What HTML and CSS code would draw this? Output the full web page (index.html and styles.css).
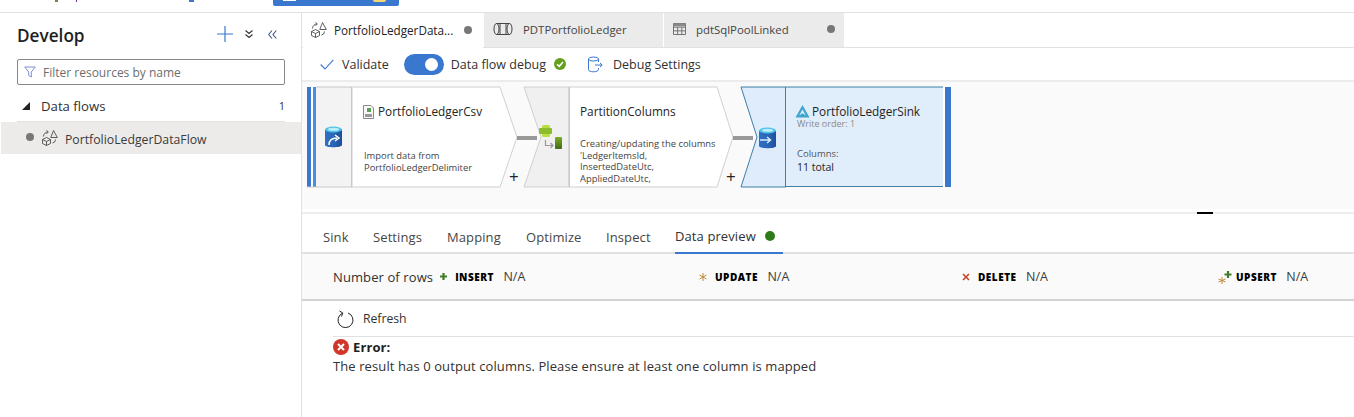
FILE: index.html
```html
<!DOCTYPE html>
<html lang="en">
<head>
<meta charset="utf-8">
<title>Develop - PortfolioLedgerDataFlow</title>
<link rel="stylesheet" href="styles.css">
</head>
<body>
<svg class="defs" width="0" height="0" aria-hidden="true">
  <defs>
    <linearGradient id="dbBody" x1="0" y1="0" x2="1" y2="0"><stop offset="0" stop-color="#2f6fc4"/><stop offset="0.5" stop-color="#2a66b8"/><stop offset="1" stop-color="#1d4f9a"/></linearGradient>
    <linearGradient id="greenBar" x1="0" y1="0" x2="0" y2="1"><stop offset="0" stop-color="#7cab2a"/><stop offset="1" stop-color="#3f6d12"/></linearGradient>
    <symbol id="flowIcon" viewBox="0 0 17 17">
      <g fill="none" stroke="#444" stroke-width=".85">
        <path d="M5.500 8.500 9.500 10.500V14.500L5.500 16.500 1.500 14.500V10.500ZM1.500 10.500 5.500 12.500 9.500 10.500M5.500 12.500V16.500"/>
        <path d="M12.500 1.500 16.300 8.500H9.800Z"/>
        <path d="M2.500 7.500A4.500 4.500 0 0 1 7 3M5.500 1.200 7.300 3 5.500 4.800"/>
        <path d="M14.500 10.500A3.500 3.500 0 0 1 11.500 14"/>
      </g>
    </symbol>
  </defs>
</svg>

<header class="topbar">
  <span class="crumb crumb-a"></span>
  <span class="crumb crumb-b"></span>
  <span class="crumb crumb-c"></span>
  <div class="top-button"><span class="top-white"></span><span class="top-yellow"></span></div>
</header>

<div class="main">
  <aside class="sidebar">
    <div class="side-head">
      <h1 class="side-title">Develop</h1>
      <svg class="ic-plus" width="16" height="16" viewBox="0 0 16 16"><path d="M8 0V16M0 8H16" stroke="#3a78d0" stroke-width="1.200" fill="none"/></svg>
      <svg class="ic-down" width="8" height="8" viewBox="0 0 8 8"><path d="M.5 .5 4 3.500 7.500 .5M.5 4.500 4 7.500 7.500 4.500" stroke="#333" stroke-width="1.100" fill="none"/></svg>
      <svg class="ic-left" width="9" height="9" viewBox="0 0 9 9"><path d="M4 .5 .7 4.500 4 8.500M8.300 .5 5 4.500 8.300 8.500" stroke="#3a5a8a" stroke-width="1.100" fill="none"/></svg>
    </div>
    <div class="filter">
      <svg width="12" height="12" viewBox="0 0 12 12"><path d="M.7 1H11.300L7.300 6V11L4.700 9.500V6Z" fill="none" stroke="#7a8fd0" stroke-width="1"/></svg>
      <span class="filter-text">Filter resources by name</span>
    </div>
    <div class="group-row">
      <svg width="8" height="8" viewBox="0 0 8 8"><path d="M8 0V8H0Z" fill="#222"/></svg>
      <span class="group-name">Data flows</span>
      <span class="group-count">1</span>
    </div>
    <div class="flow-row">
      <span class="dot"></span>
      <svg class="flow-ic" width="17" height="17"><use href="#flowIcon"/></svg>
      <span class="flow-name">PortfolioLedgerDataFlow</span>
    </div>
  </aside>

  <section class="content">
    <nav class="doc-tabs">
      <div class="doc-tab doc-tab-active">
        <svg width="17" height="17"><use href="#flowIcon"/></svg>
        <span class="doc-name doc-name-active">PortfolioLedgerData...</span>
        <span class="dot dot-end"></span>
      </div>
      <div class="doc-tab">
        <svg width="20" height="14" viewBox="0 0 20 14"><g fill="none" stroke="#444" stroke-width="1"><ellipse cx="3.500" cy="7" rx="2.500" ry="5.500"/><ellipse cx="16.500" cy="7" rx="2.500" ry="5.500"/><path d="M3.500 1.500H16.500M3.500 12.500H16.500"/><path d="M7 2V12M13 2V12"/></g></svg>
        <span class="doc-name">PDTPortfolioLedger</span>
      </div>
      <div class="doc-tab doc-tab-last">
        <svg width="13" height="12" viewBox="0 0 14 13"><g fill="none" stroke="#6a6a6a" stroke-width="1"><path d="M.5 .5H13.500V12.500H.5ZM.5 4.500H13.500M.5 8.500H13.500M5 4.500V12.500M9.500 4.500V12.500"/></g><path d="M.5 .5H13.500V3.500H.5Z" fill="#8a8a8a"/></svg>
        <span class="doc-name">pdtSqlPoolLinked</span>
        <span class="dot dot-end"></span>
      </div>
    </nav>

    <div class="toolbar">
      <svg class="tb-check" width="14" height="11" viewBox="0 0 14 11"><path d="M.7 5.500 5 10 13.300 .8" fill="none" stroke="#3a78d0" stroke-width="1.100"/></svg>
      <span class="tb-validate">Validate</span>
      <span class="toggle"><span class="knob"></span></span>
      <span class="tb-debug">Data flow debug</span>
      <svg class="tb-ok" width="12" height="12" viewBox="0 0 12 12"><circle cx="6" cy="6" r="6" fill="#63a01f"/><path d="M3 6.200 5.200 8.300 9 4" fill="none" stroke="#fff" stroke-width="1.500"/></svg>
      <svg class="tb-db" width="17" height="17" viewBox="0 0 17 17"><g fill="none" stroke="#3a78d0" stroke-width="1"><ellipse cx="6.500" cy="3" rx="5" ry="2"/><path d="M1.500 3V13.500C1.500 15 4 15.800 6.500 15.800S11.500 15 11.500 13.500V12M11.500 3V6"/><path d="M8 9H15M13 7 15.200 9 13 11"/></g></svg>
      <span class="tb-settings">Debug Settings</span>
    </div>

    <div class="canvas">
      <svg class="canvas-art" width="660" height="127" viewBox="302 82 660 127">
        <!-- source node -->
        <path d="M316 87H352V187H316Z" fill="#f3f3f3"/>
        <rect x="307" y="87" width="4" height="100" fill="#3a78d0"/>
        <rect x="311" y="87" width="2" height="100" fill="#fff"/>
        <rect x="313" y="87" width="3" height="100" fill="#4e8be0"/>
        <path d="M352 87H500L517 137 500 187H352Z" fill="#fff" stroke="#d0d0d0"/>
        <path d="M351.500 87V187" stroke="#c8c8c8"/>
        <path d="M307 187H352M316 87H352" stroke="#c8c8c8"/>
        <path d="M325 129V145C325 148 342 148 342 145V129Z" fill="url(#dbBody)"/>
        <ellipse cx="333.500" cy="129.500" rx="8.500" ry="3" fill="#4fc3e8"/>
        <ellipse cx="333.500" cy="129.300" rx="5.500" ry="1.500" fill="#bdeefa"/>
        <path d="M329 145C329 140 332 138 337 138M335 135 339 138 335 141" fill="none" stroke="#fff" stroke-width="1.500"/>
        <!-- transform node -->
        <path d="M524 87H569V187H524L541 137Z" fill="#f0f0f0" stroke="#d0d0d0"/>
        <path d="M569 87H717L733 137 717 187H569Z" fill="#fff" stroke="#d0d0d0"/>
        <path d="M569.500 87V187" stroke="#c8c8c8"/>
        <rect x="517" y="136" width="20" height="4" fill="#999"/>
        <rect x="542" y="125" width="8" height="12" rx="1.500" fill="#b8de40"/>
        <rect x="539" y="128" width="13" height="6" rx="1" fill="#8cbc2c"/>
        <path d="M545.500 140V145.500H553M550.500 143 553 145.500 550.500 148" fill="none" stroke="#999" stroke-width="1.200"/>
        <rect x="555" y="137" width="7" height="12" rx="1" fill="url(#greenBar)"/>
        <!-- sink node -->
        <path d="M741 87H786V187H741L757 137Z" fill="#deecfb" stroke="#3f7fa6"/>
        <rect x="786" y="87" width="165" height="100" fill="#e0edfb"/>
        <path d="M785.500 87V187M786 87H943M786 186.500H943" stroke="#3f7fa6"/>
        <rect x="943" y="87" width="2" height="100" fill="#fff"/>
        <rect x="945" y="87" width="6" height="100" fill="#3a78d0"/>
        <rect x="733" y="136" width="20" height="4" fill="#999"/>
        <path d="M759 131V146C759 149 776 149 776 146V131Z" fill="url(#dbBody)"/>
        <ellipse cx="767.500" cy="130.500" rx="8.500" ry="3" fill="#4fc3e8"/>
        <ellipse cx="767.500" cy="130.300" rx="5.500" ry="1.500" fill="#bdeefa"/>
        <path d="M760 140H770M767 137 770.500 140 767 143" fill="none" stroke="#d7ecfa" stroke-width="1.500"/>
        <!-- sink logo -->
        <path d="M802.500 105 809.500 117.500H795.500Z" fill="#41a5cf"/>
        <path d="M802.500 109.500 805.800 115.500 802.500 113.300 799.200 115.500Z" fill="#e0edfb"/>
        <!-- csv file icon -->
        <path d="M363.500 105.500H371L373.500 108V118.500H363.500Z" fill="#f8f8f8" stroke="#888"/>
        <rect x="367" y="108" width="4" height="4" fill="#5c9e58"/>
        <rect x="365" y="114" width="7" height="3" fill="#999"/>
      </svg>

      <div class="node-text src-title"><span class="node-title">PortfolioLedgerCsv</span></div>
      <p class="node-text node-desc src-desc">Import data from<br>PortfolioLedgerDelimiter</p>
      <span class="node-text plus plus-a">+</span>

      <div class="node-text pc-title"><span class="node-title">PartitionColumns</span></div>
      <div class="node-text node-desc pc-desc">Creating/updating the columns<br>'LedgerItemsId,<br>InsertedDateUtc,<br>AppliedDateUtc,<br>LedgerItemType</div>
      <span class="node-text plus plus-b">+</span>

      <div class="node-text sink-title"><span class="node-title">PortfolioLedgerSink</span></div>
      <span class="node-text sink-order">Write order: 1</span>
      <span class="node-text sink-cols">Columns:</span>
      <span class="node-text sink-total">11 total</span>
    </div>

    <div class="splitter"><span class="grip"></span></div>

    <nav class="panel-tabs">
      <span class="panel-tab tab-sink">Sink</span>
      <span class="panel-tab tab-settings">Settings</span>
      <span class="panel-tab tab-mapping">Mapping</span>
      <span class="panel-tab tab-optimize">Optimize</span>
      <span class="panel-tab tab-inspect">Inspect</span>
      <span class="panel-tab tab-preview">Data preview<span class="green-dot"></span></span>
    </nav>

    <div class="stats">
      <div class="stat">
        <span class="stat-lead">Number of rows</span>
        <svg class="s-insert" width="7" height="7" viewBox="0 0 7 7"><path d="M3.500 0V7M0 3.500H7" stroke="#3f7d2a" stroke-width="2.200"/></svg>
        <b class="stat-key">INSERT</b><span class="stat-val">N/A</span>
      </div>
      <div class="stat">
        <svg class="s-update" width="8" height="8" viewBox="0 0 8 8"><path d="M4 0V8M.5 2 7.500 6M.5 6 7.500 2" stroke="#c08a3a" stroke-width="1"/></svg>
        <b class="stat-key">UPDATE</b><span class="stat-val">N/A</span>
      </div>
      <div class="stat">
        <svg class="s-delete" width="8" height="8" viewBox="0 0 8 8"><path d="M1 1 7 7M7 1 1 7" stroke="#c8401e" stroke-width="1.500"/></svg>
        <b class="stat-key">DELETE</b><span class="stat-val">N/A</span>
      </div>
      <div class="stat">
        <svg class="s-upsert" width="14" height="14" viewBox="0 0 14 14"><path d="M10 1V8M6.500 4.500H13.500" stroke="#3f7d2a" stroke-width="2.200"/><path d="M4 7V14M.5 9 7.500 12M.5 12 7.500 9" stroke="#c08a3a" stroke-width="1"/></svg>
        <b class="stat-key">UPSERT</b><span class="stat-val">N/A</span>
      </div>
    </div>

    <div class="refresh-row">
      <svg width="17" height="18" viewBox="0 0 17 18"><path d="M5.500 3.200A7.500 7.500 0 1 0 11 3" fill="none" stroke="#222" stroke-width="1"/><path d="M2.500 1 5.800 3 4.500 6.500" fill="none" stroke="#222" stroke-width="1"/></svg>
      <span>Refresh</span>
    </div>

    <div class="error">
      <div class="error-head">
        <svg width="16" height="16" viewBox="0 0 16 16"><circle cx="8" cy="8" r="8" fill="#d0362a"/><path d="M5 5 11 11M11 5 5 11" stroke="#fff" stroke-width="2"/></svg>
        <strong>Error:</strong>
      </div>
      <p class="error-msg">The result has 0 output columns. Please ensure at least one column is mapped</p>
    </div>
  </section>
</div>
</body>
</html>
```
FILE: styles.css
```css
* { box-sizing: border-box; }
html, body { margin: 0; height: 100%; }
body {
  font-family: "Open Sans", "Noto Sans", "Liberation Sans", sans-serif;
  font-size: 12px;
  color: #323130;
  background: #fff;
  overflow: hidden;
}
.defs { position: absolute; }
svg { display: block; flex: none; }

/* top strip */
.topbar {
  height: 13px;
  border-bottom: 1px solid #e1e1e1;
  display: flex;
  align-items: flex-start;
  padding-left: 55px;
}
.crumb { display: block; height: 2px; }
.crumb-a { width: 3px; background: #8a7a50; }
.crumb-b { width: 1px; height: 2px; background: #6a3ab0; margin-left: 18px; }
.crumb-c { width: 5px; background: #3a78d0; margin-left: 112px; }
.top-button {
  width: 126px;
  height: 6px;
  margin-left: 79px;
  background: #3a78d0;
  border-radius: 0 0 2px 2px;
  display: flex;
  align-items: flex-start;
  justify-content: space-between;
  padding: 0 13px 0 10px;
}
.top-white { width: 13px; height: 1px; background: #fff; }
.top-yellow { width: 13px; height: 2px; background: #f2d774; border-radius: 0 0 6px 6px; }

.main { display: flex; height: 404px; }

/* sidebar */
.sidebar {
  width: 302px;
  flex: none;
  border-right: 1px solid #e1e1e1;
  padding-top: 10px;
}
.side-head {
  display: flex;
  align-items: center;
  height: 26px;
  padding-left: 17px;
}
.side-title { margin: 0; font-size: 17.200px; font-weight: 600; color: #201f1e; width: 200px; line-height: 26px; }
.ic-plus { margin-right: 12px; margin-top: -4px; }
.ic-down { margin-right: 15px; margin-top: -4px; }
.ic-left { margin-top: -4px; }
.filter {
  margin: 10px 16px 0 17px;
  height: 26px;
  border: 1px solid #8a8886;
  border-radius: 2px;
  display: flex;
  align-items: center;
  padding-left: 6px;
  gap: 7px;
}
.filter-text { color: #6e6e6e; font-size: 12px; }
.group-row {
  margin: 0 16px 0 17px;
  height: 37px;
  border-bottom: 1px solid #e1e1e1;
  display: flex;
  align-items: center;
  padding: 5px 0 0 5px;
}
.group-name { margin-left: 11px; font-weight: 500; font-size: 13.200px; flex: 1; }
.group-count { font-size: 11px; font-weight: 500; }
.flow-row {
  height: 32px;
  background: #edebe9;
  display: flex;
  align-items: center;
  padding-left: 25px;
  margin-left: 1px;
}
.dot { width: 8px; height: 8px; border-radius: 50%; background: #777; flex: none; }
.flow-row .dot { margin-right: 7px; margin-top: -2px; }
.flow-ic { margin-top: -2px; }
.flow-name { margin-left: 7px; margin-top: 2px; font-size: 12.250px; color: #3b3a39; }

/* content */
.content { flex: 1; min-width: 0; display: flex; flex-direction: column; }
.doc-tabs { display: flex; height: 35px; border-bottom: 1px solid #e1e1e1; padding-left: 1px; }
.doc-tab {
  width: 180px;
  display: flex;
  align-items: center;
  padding: 0 10px 2px 9px;
  background: #ebebeb;
  border-left: 1px solid #fff;
  color: #444;
  font-size: 11.400px;
}
.doc-tab svg { margin-right: 10px; }
.doc-tab-last { width: 181px; padding-right: 9px; }
.doc-tab-active { background: #fff; padding: 0 11px 2px 7px; border-left: 0; height: 35px; width: 180px; }
.doc-tab-active svg { margin-right: 7px; }
.doc-name-active { color: #222; font-weight: 500; font-size: 11.700px; }
.doc-name { flex: 1; white-space: nowrap; }
.dot-end { margin-right: 0; }
.toolbar {
  height: 34px;
  display: flex;
  align-items: center;
  border-bottom: 2px solid #ececec;
  padding-left: 18px;
  font-size: 12.500px;
  color: #323130;
}
.tb-validate { margin-left: 8px; }
.toggle {
  width: 40px;
  height: 21px;
  border-radius: 11px;
  background: #3a78d0;
  margin-left: 15px;
  padding: 4px 6px 0 0;
  display: flex;
  justify-content: flex-end;
}
.knob { width: 13px; height: 13px; border-radius: 50%; background: #fff; }
.tb-debug { margin-left: 7px; }
.tb-ok { margin-left: 8px; }
.tb-db { margin-left: 21px; }
.tb-settings { margin-left: 9px; }

/* diagram canvas: nodes sit at free coordinates */
.canvas { height: 127px; background: #fafafa; position: relative; flex: none; }
.canvas-art { position: absolute; left: 0; top: 0; }
.node-text { position: absolute; color: #252423; white-space: nowrap; }
.node-title { font-size: 11.800px; font-weight: 500; }
.node-desc { margin: 0; font-size: 9.400px; line-height: 11.700px; color: #444; }
.src-title { left: 76px; top: 21px; }
.src-desc { left: 62px; top: 68px; line-height: 12.300px; }
.pc-title { left: 278px; top: 21px; }
.pc-desc { left: 278px; top: 56px; height: 49px; overflow: hidden; }
.plus { font-size: 17px; line-height: 17px; }
.plus-a { left: 207px; top: 86px; }
.plus-b { left: 424px; top: 86px; }
.sink-title { left: 510px; top: 21px; }
.sink-order { left: 495px; top: 35px; font-size: 9px; color: #8a8a8a; }
.sink-cols { left: 495px; top: 65px; font-size: 9.500px; color: #555; }
.sink-total { left: 495px; top: 78px; font-size: 10.500px; font-weight: 500; }

.splitter { height: 5px; background: linear-gradient(#fff 3px, #eee 3px); display: flex; justify-content: flex-end; padding-right: 141px; flex: none; }
.grip { width: 16px; height: 2px; margin-top: 3px; background: #000; }

.panel-tabs {
  height: 40px;
  display: flex;
  border-bottom: 2px solid #e1e1e1;
  padding-left: 21px;
  font-size: 13px;
  letter-spacing: .1px;
  color: #484644;
  flex: none;
}
.panel-tab { display: flex; align-items: center; height: 40px; padding-top: 6px; }
.tab-sink { width: 50px; }
.tab-settings { width: 74px; }
.tab-mapping { width: 79px; }
.tab-optimize { width: 80px; }
.tab-inspect { width: 69px; }
.tab-preview { width: 108px; color: #323130; font-weight: 500; border-bottom: 2px solid #3a78d0; }
.green-dot { width: 10px; height: 10px; border-radius: 50%; background: #2f7a1a; margin-left: 9px; }

.stats {
  display: grid;
  grid-template-columns: 366px 263px 256px 1fr;
  height: 47px;
  padding-left: 31px;
  background: #fafafa;
  border-bottom: 2px solid #d2d2d2;
  flex: none;
  font-size: 12.500px;
}
.stat { display: flex; align-items: center; }
.stat-lead { margin-right: 7px; font-size: 13px; letter-spacing: .1px; }
.stat-key { font-size: 10px; font-weight: 800; color: #000; letter-spacing: .5px; margin-left: 8px; }
.s-upsert + .stat-key { margin-left: 4px; }
.stat-val { margin-left: 9.500px; color: #3b3a39; }
.refresh-row {
  height: 36px;
  margin-left: 31px;
  display: flex;
  align-items: center;
  gap: 9px;
  padding-left: 4px;
  border-bottom: 1px solid #e1e1e1;
  font-size: 12.200px;
  flex: none;
}
.error { margin-left: 31px; padding-top: 1px; font-size: 13px; letter-spacing: .1px; color: #323130; }
.error-head { display: flex; align-items: center; gap: 4px; height: 17px; }
.error-head strong { color: #201f1e; font-weight: 700; }
.error-msg { margin: 2px 0 0; white-space: nowrap; }
```
